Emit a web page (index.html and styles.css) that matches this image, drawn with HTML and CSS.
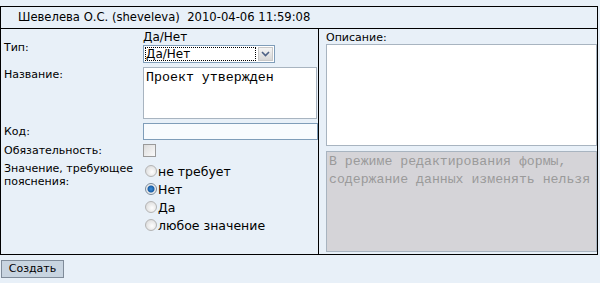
FILE: index.html
```html
<!DOCTYPE html>
<html lang="ru">
<head>
    <meta charset="UTF-8">
    <link rel="stylesheet" href="styles.css">
</head>
<body>
    <div class="form-box">
        <div class="form-head">Шевелева О.С. (sheveleva)&nbsp; 2010-04-06 11:59:08</div>
        <div class="form-body">
            <div class="left-col">
                <div class="row row-mid">
                    <div class="label">Тип:</div>
                    <div class="field">
                        <div class="type-text">Да/Нет</div>
                        <div class="select">
                            <span class="select-value">Да/Нет</span>
                            <span class="select-arrow">
                                <svg width="9" height="6" viewBox="0 0 9 6"><path d="M1 1 L4.5 4.5 L8 1" fill="none" stroke="#4d6185" stroke-width="1.6"/></svg>
                            </span>
                        </div>
                    </div>
                </div>
                <div class="row">
                    <div class="label label-top">Название:</div>
                    <div class="field"><div class="textarea name-area">Проект утвержден</div></div>
                </div>
                <div class="row row-mid">
                    <div class="label">Код:</div>
                    <div class="field"><div class="text-input"></div></div>
                </div>
                <div class="row row-mid">
                    <div class="label">Обязательность:</div>
                    <div class="field"><span class="checkbox"></span></div>
                </div>
                <div class="row">
                    <div class="label label-top">Значение, требующее<br>пояснения:</div>
                    <div class="field radios">
                        <div class="radio-row"><span class="radio"></span>не требует</div>
                        <div class="radio-row"><span class="radio checked"></span>Нет</div>
                        <div class="radio-row"><span class="radio"></span>Да</div>
                        <div class="radio-row"><span class="radio"></span>любое значение</div>
                    </div>
                </div>
            </div>
            <div class="right-col">
                <div class="desc-label">Описание:</div>
                <div class="textarea desc-area"></div>
                <div class="textarea locked-area">В режиме редактирования формы,<br>содержание данных изменять нельзя</div>
            </div>
        </div>
    </div>
    <div class="actions">
        <button type="button" class="create-button">Создать</button>
    </div>
</body>
</html>
```

FILE: styles.css
```css
body {
    margin: 0;
    padding: 0;
    background-color: #e8f0f8;
    font-family: "DejaVu Sans", Verdana, sans-serif;
    color: #000;
}

.form-box {
    margin-top: 6px;
    width: 596px;
    border: 1px solid #000;
}

.form-head {
    height: 21px;
    line-height: 21px;
    padding-left: 17px;
    font-size: 11.6px;
    border-bottom: 1px solid #000;
}

.form-body {
    display: grid;
    grid-template-columns: 318px 1fr;
    height: 225px;
}

.left-col {
    border-right: 1px solid #000;
    padding-top: 2px;
}

.row {
    display: grid;
    grid-template-columns: 142px 1fr;
    margin-bottom: 4px;
}

.row-mid {
    align-items: center;
}

.label {
    padding-left: 3px;
    font-size: 11px;
    line-height: 13px;
}

.label-top {
    padding-top: 1px;
}

.type-text {
    font-size: 12px;
    line-height: 12px;
}

.select {
    margin-top: 2px;
    width: 128px;
    height: 16px;
    border: 1px solid #7f9db9;
    background-color: #fff;
    display: flex;
    align-items: center;
    padding: 0 1px;
}

.select-value {
    flex-grow: 1;
    height: 14px;
    line-height: 14px;
    font-size: 12px;
    outline: 1px dotted #000;
    outline-offset: -1px;
    padding-left: 1px;
}

.select-arrow {
    width: 15px;
    height: 14px;
    margin-left: 2px;
    background: linear-gradient(#f4f4f4, #d8d8d8);
    border: 1px solid #c8c8c8;
    box-sizing: border-box;
    display: flex;
    align-items: center;
    justify-content: center;
}

.textarea {
    background-color: #fff;
    border: 1px solid #a8b4c0;
    box-sizing: border-box;
}

.name-area {
    width: 174px;
    height: 52px;
    padding: 2px 2px;
    font-family: "Liberation Mono", "Courier New", monospace;
    font-size: 13.3px;
}

.text-input {
    width: 175px;
    height: 17px;
    border: 1px solid #7f9db9;
    background-color: #f8fbfe;
    box-sizing: border-box;
}

.checkbox {
    display: block;
    width: 13px;
    height: 13px;
    border: 1px solid #9a9a9a;
    background: linear-gradient(135deg, #dcdcdc, #fafafa);
    box-sizing: border-box;
}

.radios {
    padding-left: 2px;
    margin-top: 1px;
}

.radio-row {
    display: flex;
    align-items: center;
    height: 18px;
    font-size: 12.5px;
}

.radio {
    width: 12px;
    height: 12px;
    border-radius: 50%;
    border: 1px solid #b4b4b4;
    background: radial-gradient(circle at 60% 60%, #fefefe, #d4d4d4);
    box-sizing: border-box;
    margin-right: 1px;
}

.radio.checked {
    background: radial-gradient(circle at 50% 50%, #3d8fd8 0, #1a5fa8 3px, #e8e8e8 4px, #fdfdfd 6px);
    border-color: #7a8a9a;
}

.right-col {
    padding: 2px 0 0 7px;
}

.desc-label {
    font-size: 11px;
    line-height: 13px;
}

.desc-area {
    width: 271px;
    height: 102px;
}

.locked-area {
    margin-top: 5px;
    width: 271px;
    height: 101px;
    background-color: #d5d4d8;
    color: #9a9a9a;
    font-family: "Liberation Mono", "Courier New", monospace;
    font-size: 13.2px;
    line-height: 18px;
    padding: 1px 1px 1px 2px;
    overflow: hidden;
    white-space: nowrap;
}

.actions {
    padding: 2px 1px;
}

.create-button {
    width: 63px;
    height: 18px;
    padding: 0;
    background-color: #c8d4e0;
    border: 1px solid #7f8b99;
    font-family: "DejaVu Sans", Verdana, sans-serif;
    font-size: 11px;
    color: #000;
}
```
